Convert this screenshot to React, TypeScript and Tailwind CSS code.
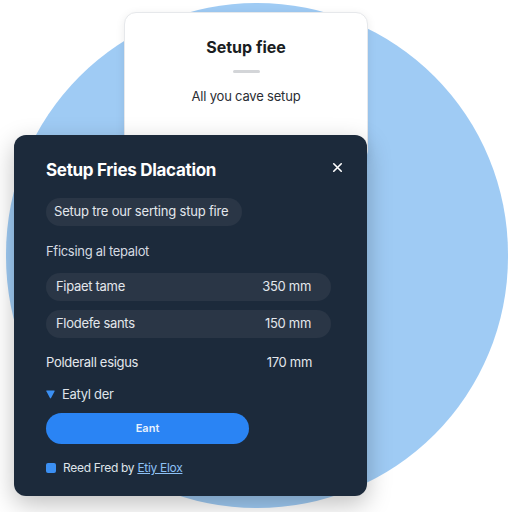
import React from "react";

function CloseIcon() {
  return (
    <svg viewBox="0 0 24 24" fill="none" stroke="currentColor" strokeWidth={2.6} className="w-[15px] h-[15px]">
      <path strokeLinecap="round" strokeLinejoin="round" d="M6 18L18 6M6 6l12 12" />
    </svg>
  );
}

function Row({ label, value, filled }: { label: string; value: string; filled?: boolean }) {
  return (
    <div
      className={`w-[285px] h-[28px] flex items-center justify-between rounded-full ${
        filled ? "bg-[#2a3646] pl-[10px] pr-[20px]" : "pl-0 pr-[19px]"
      }`}
    >
      <span className="text-[13px] tracking-[-0.3px] text-[#e3e7ec]">{label}</span>
      <span className="text-[13px] tracking-[-0.3px] text-[#e3e7ec]">{value}</span>
    </div>
  );
}

export default function App() {
  return (
    <div
      className="relative w-[512px] h-[512px] overflow-hidden bg-white"
      style={{ fontFamily: "Inter, 'Noto Sans', sans-serif" }}
    >
      {/* background circle */}
      <div className="absolute left-[6px] top-[3px] w-[502px] h-[505px] rounded-full bg-[#9fcbf4]" />

      <div className="relative flex flex-col pt-[12px]">
        {/* white card behind */}
        <div className="ml-[124px] w-[244px] h-[150px] bg-white rounded-[12px] border border-[#e6e8eb] shadow-[0_2px_10px_rgba(0,0,0,0.08)] flex flex-col items-center pt-[24px]">
          <h1 className="text-[16px] leading-[20px] font-bold text-[#1a1d22]">Setup fiee</h1>
          <div className="mt-[13px] w-[27px] h-[3px] rounded-full bg-[#d3d5d8]" />
          <p className="mt-[14px] text-[13px] leading-[18px] tracking-[-0.2px] text-[#2a2d33]">All you cave setup</p>
        </div>

        {/* dark modal */}
        <div className="-mt-[27px] ml-[14px] w-[353px] h-[361px] bg-[#1c2a3b] rounded-[12px] shadow-[0_8px_24px_rgba(0,0,0,0.25)] pl-[32px] pt-[24px] flex flex-col">
          <div className="flex items-center justify-between pr-[22px]">
            <h2 className="text-[17px] leading-[22px] font-bold text-white tracking-[-0.3px]">Setup Fries Dlacation</h2>
            <span className="text-white -mt-[6px]">
              <CloseIcon />
            </span>
          </div>

          <div className="mt-[17px] self-start h-[28px] flex items-center rounded-full bg-[#2a3646] pl-[8px] pr-[14px]">
            <span className="text-[13px] tracking-[-0.2px] text-[#e3e7ec]">Setup tre our serting stup fire</span>
          </div>

          <p className="mt-[16px] text-[13px] leading-[18px] tracking-[-0.3px] text-[#d5dae1]">Fficsing al tepalot</p>

          <div className="mt-[13px] flex flex-col gap-[9px]">
            <Row label="Fipaet tame" value="350 mm" filled />
            <Row label="Flodefe sants" value="150 mm" filled />
          </div>

          <div className="mt-[11px]">
            <Row label="Polderall esigus" value="170 mm" />
          </div>

          <div className="mt-[8px] flex items-center gap-[7px]">
            <svg viewBox="0 0 10 10" className="w-[9px] h-[9px]">
              <path d="M0 1.5 Q0 0.5 1 0.5 L9 0.5 Q10 0.5 9.6 1.4 L5.6 9 Q5 10 4.4 9 L0.4 1.4 Z" fill="#3b8ff2" />
            </svg>
            <span className="text-[13px] leading-[18px] tracking-[-0.3px] text-[#dfe4ea]">Eatyl der</span>
          </div>

          <button className="mt-[10px] w-[203px] h-[31px] rounded-full bg-[#2a84f4] text-[11px] font-semibold text-[#e8f1fd]">
            Eant
          </button>

          <div className="mt-[15px] flex items-center gap-[7px]">
            <span className="w-[10px] h-[10px] rounded-[2px] bg-[#3b8ff2]" />
            <span className="text-[12px] leading-[18px] tracking-[-0.3px] text-[#dfe4ea]">
              Reed Fred by <span className="text-[#8cc0f5] underline">Etiy Elox</span>
            </span>
          </div>
        </div>
      </div>
    </div>
  );
}
